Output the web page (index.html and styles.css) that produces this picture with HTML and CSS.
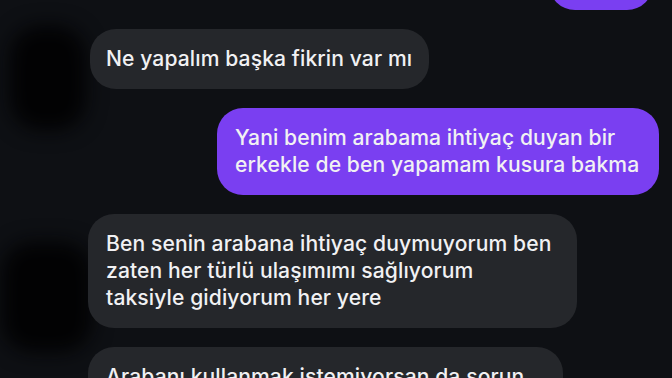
FILE: index.html
```html
<!DOCTYPE html>
<html lang="tr">
<head>
<meta charset="utf-8">
<link rel="stylesheet" href="styles.css">
</head>
<body>
<div class="chat">
  <div class="blur blur-a"></div>
  <div class="blur blur-b"></div>
  <div class="row out"><div class="bubble purple b0"></div></div>
  <div class="row in"><div class="bubble gray b1">Ne yapalım başka fikrin var mı</div></div>
  <div class="row out"><div class="bubble purple b2">Yani benim arabama ihtiyaç duyan bir<br>erkekle de ben yapamam kusura bakma</div></div>
  <div class="row in"><div class="bubble gray b3">Ben senin arabana ihtiyaç duymuyorum ben<br>zaten her türlü ulaşımımı sağlıyorum<br>taksiyle gidiyorum her yere</div></div>
  <div class="row in"><div class="bubble gray b4">Arabanı kullanmak istemiyorsan da sorun</div></div>
</div>
</body>
</html>
```
FILE: styles.css
```css
html, body {
  margin: 0;
  padding: 0;
  background: #0e1014;
  width: 672px;
  height: 378px;
  overflow: hidden;
}
.chat {
  position: relative;
  display: flex;
  flex-direction: column;
  gap: 19px;
  margin-top: -50px;
  padding: 0 13px 0 88px;
  font-family: Inter, "Noto Sans", sans-serif;
  font-size: 21.1px;
  font-weight: 500;
  line-height: 27px;
  color: #f1f1f3;
}
.row {
  display: flex;
  position: relative;
  z-index: 1;
}
.row.out { justify-content: flex-end; }
.row.in { justify-content: flex-start; }
.bubble {
  box-sizing: border-box;
  padding: 16px 18px 17px 18px;
  border-radius: 26px;
  white-space: nowrap;
  letter-spacing: 0.1px;
}
.purple { background: #7a3ff1; }
.gray { background: #25272b; }
.b0 { width: 104px; height: 60px; margin-right: 6px; }
.b1 { width: 339px; margin-left: 2px; padding-left: 16px; }
.b2 { width: 442px; }
.b3 { width: 489px; }
.b4 { width: 475px; height: 90px; }
.blur {
  position: absolute;
  background: #020203;
  filter: blur(10px);
  border-radius: 30px;
  z-index: 0;
}
.blur-a {
  left: 10px;
  top: 76px;
  width: 76px;
  height: 104px;
}
.blur-b {
  left: 2px;
  top: 292px;
  width: 90px;
  height: 110px;
}
```
